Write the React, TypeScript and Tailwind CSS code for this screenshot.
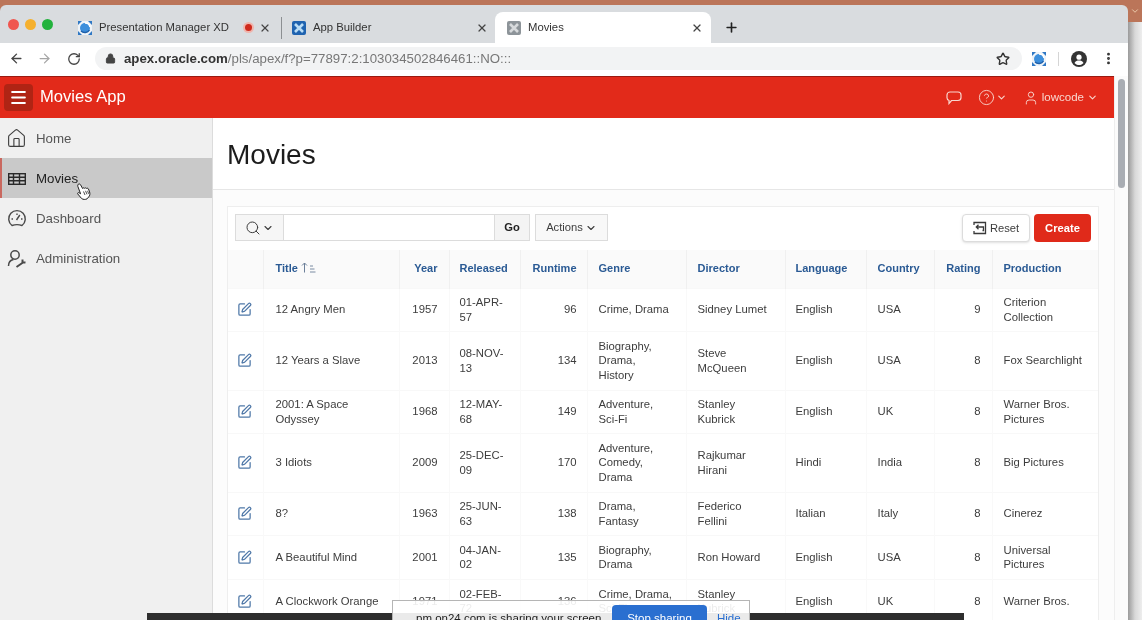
import React from "react";
import { ArrowLeft, ArrowRight, RotateCw, Lock, Star, X, Plus, Search, ChevronDown, Home, SquarePen, CircleHelp, User, EllipsisVertical, Menu } from "lucide-react";

const rows = [
  { h: "h-[43px]", t: "12 Angry Men", y: "1957", r: "01-APR-\n57", m: "96", g: "Crime, Drama", d: "Sidney Lumet", l: "English", c: "USA", s: "9", p: "Criterion\nCollection" },
  { h: "h-[59px]", t: "12 Years a Slave", y: "2013", r: "08-NOV-\n13", m: "134", g: "Biography,\nDrama,\nHistory", d: "Steve\nMcQueen", l: "English", c: "USA", s: "8", p: "Fox Searchlight" },
  { h: "h-[43px]", t: "2001: A Space\nOdyssey", y: "1968", r: "12-MAY-\n68", m: "149", g: "Adventure,\nSci-Fi", d: "Stanley\nKubrick", l: "English", c: "UK", s: "8", p: "Warner Bros.\nPictures" },
  { h: "h-[59px]", t: "3 Idiots", y: "2009", r: "25-DEC-\n09", m: "170", g: "Adventure,\nComedy,\nDrama", d: "Rajkumar\nHirani", l: "Hindi", c: "India", s: "8", p: "Big Pictures" },
  { h: "h-[43px]", t: "8?", y: "1963", r: "25-JUN-\n63", m: "138", g: "Drama,\nFantasy", d: "Federico\nFellini", l: "Italian", c: "Italy", s: "8", p: "Cinerez" },
  { h: "h-[44px]", t: "A Beautiful Mind", y: "2001", r: "04-JAN-\n02", m: "135", g: "Biography,\nDrama", d: "Ron Howard", l: "English", c: "USA", s: "8", p: "Universal\nPictures" },
  { h: "h-[44px]", t: "A Clockwork Orange", y: "1971", r: "02-FEB-\n72", m: "136", g: "Crime, Drama,\nSci-Fi", d: "Stanley\nKubrick", l: "English", c: "UK", s: "8", p: "Warner Bros." },
];

const headers: [string, string][] = [
  ["Year", "px-[11px] text-right"],
  ["Released", "px-[10px] text-left"],
  ["Runtime", "px-[10px] text-right"],
  ["Genre", "px-[11px] text-left"],
  ["Director", "px-[11px] text-left"],
  ["Language", "px-[10px] text-left"],
  ["Country", "px-[11px] text-left"],
  ["Rating", "px-[11px] text-right"],
  ["Production", "px-[11px] text-left"],
];

function TargetFav({ size = 14 }: { size?: number }) {
  return (
    <svg width={size} height={size} viewBox="0 0 14 14">
      <rect width="14" height="14" fill="#eef3f8" />
      <path d="M0 0h4L0 4zM14 0v4L10 0zM0 14v-4l4 4zM14 14h-4l4-4z" fill="#2f78c4" />
      <circle cx="7" cy="7" r="5" fill="#3d8fdc" />
      <path d="M3 10a5.5 5.5 0 0 0 8.5-1" stroke="#1f5fa8" strokeWidth="1.4" fill="none" />
      <path d="M7 2a5 5 0 0 1 5 4" stroke="#ffffff" strokeWidth="1.4" fill="none" />
    </svg>
  );
}

function BuilderFav() {
  return (
    <svg width="14" height="14" viewBox="0 0 14 14">
      <rect width="14" height="14" rx="2" fill="#1f63b0" />
      <path d="M3 3l8 8M11 3l-8 8" stroke="#b9dcf5" strokeWidth="2.6" />
    </svg>
  );
}

function MoviesFav() {
  return (
    <svg width="14" height="14" viewBox="0 0 14 14">
      <rect width="14" height="14" rx="2" fill="#8d9499" />
      <path d="M3 3l8 8M11 3l-8 8" stroke="#d7dadc" strokeWidth="2.6" />
    </svg>
  );
}

function ProfileIcon() {
  return (
    <svg width="16" height="16" viewBox="0 0 16 16">
      <circle cx="8" cy="8" r="8" fill="#333" />
      <circle cx="8" cy="6.200" r="2.600" fill="#fff" />
      <path d="M3.500 12c1-1.800 2.700-2.400 4.500-2.400s3.500.6 4.500 2.400c-1 1.300-2.700 2.100-4.500 2.100S4.500 13.300 3.500 12z" fill="#fff" />
    </svg>
  );
}

function TableIcon() {
  return (
    <svg width="18" height="12" viewBox="0 0 18 12" fill="none" stroke="#2a2a2a" strokeWidth="1.4">
      <rect x="0.7" y="0.7" width="16.6" height="10.6" />
      <path d="M0.7 4.2h16.6M0.7 7.7h16.6M5.5 0.7v10.6M11.5 0.7v10.6" />
    </svg>
  );
}

function GaugeIcon() {
  return (
    <svg width="20" height="20" viewBox="0 0 20 20" fill="none" stroke="#4a4a4a" strokeWidth="1.4">
      <path d="M5 16.500a8.300 8.300 0 1 1 10 0c-3-1-7-1-10 0z" />
      <path d="M9.500 11l3.300-5M4.500 10h1.500M10 4.500V6M15.500 10H14" />
    </svg>
  );
}

function AdminIcon() {
  return (
    <svg width="20" height="20" viewBox="0 0 20 20" fill="none" stroke="#4a4a4a" strokeWidth="1.5">
      <circle cx="8" cy="6" r="4.200" />
      <path d="M1.500 17c0-4 2.500-6 5-6.500" />
      <path d="M9.500 18l6.500-4.500M15.500 10.500v2.700l3 .3" strokeWidth="2" />
    </svg>
  );
}

function SortIcon() {
  return (
    <svg width="15" height="11" viewBox="0 0 15 11" fill="none" stroke="#6b7f99" strokeWidth="1">
      <path d="M3.500 10.500V1M1 3.500L3.500 1 6 3.500" />
      <path d="M9 4h3M9 7h4.500M9 10h5.500" strokeWidth="0.9" />
    </svg>
  );
}

function ResetIcon() {
  return (
    <svg width="14" height="14" viewBox="0 0 14 14" fill="none" stroke="#3a3a3a" strokeWidth="1.3">
      <path d="M1 4V1.500h11.500v11H1V10" />
      <path d="M9.500 9.500h1V6H3.500M5.500 3.800L3.300 6l2.200 2.200" />
    </svg>
  );
}

function ChatIcon() {
  return (
    <svg width="16" height="14" viewBox="0 0 16 14" fill="none" stroke="#f9d6ce" strokeWidth="1.2">
      <path d="M4 1h8a3 3 0 0 1 3 3v2.500a3 3 0 0 1-3 3H5.500L3 12.500V9.500A3 3 0 0 1 1 6.500V4a3 3 0 0 1 3-3z" />
    </svg>
  );
}

function HandCursor() {
  return (
    <svg width="15" height="17" viewBox="0 0 15 17" fill="#fff" stroke="#222" strokeWidth="1">
      <path d="M2.300 1.200c.9-.6 1.800-.2 2.300.7l2 3.600c.3-.8 1.400-.9 2-.2.4-.6 1.400-.6 1.900.1.600-.4 1.500-.2 1.900.5l1.200 3c.6 2 .3 3.800-.9 5l-1.700 2c-1.600.8-4 .7-5.300-.3L1.800 11c-.6-.9.4-1.800 1.300-1.200l1.500 1L1.800 3.300c-.2-.8 0-1.600.5-2.100z" />
      <path d="M7.500 8.500l1.500 3.500M9.500 7.800l1.500 3.500M11.500 7.800l1.200 3" strokeWidth="0.8" />
    </svg>
  );
}

function NavItem({ icon, label, active }: { icon: React.ReactNode; label: string; active?: boolean }) {
  return (
    <div className={active ? "flex h-10 items-center border-l-2 border-[#c9685f] bg-[#c9c9c9] pl-[6px] pt-[1px] text-[13.300px] text-[#222]" : "flex h-10 items-center pl-[7px] pt-[1px] text-[13.300px] text-[#555555]"}>
      <span className={active ? "flex w-[28px] items-center" : "flex w-[29px] items-center"}>{icon}</span>
      {label}
    </div>
  );
}

export default function App() {
  return (
    <div className="relative flex h-[620px] w-[1142px] overflow-hidden bg-[#ececec] font-['Liberation_Sans',Arial,sans-serif] blur-[0.45px]">
      <div className="flex h-[620px] w-[1128px] flex-col bg-[#bb7559] pt-[5px]">
        {/* Tab strip */}
        <div className="flex h-[38px] items-end rounded-t-md bg-[#d9dcdf] text-[11.300px] text-[#333]">
          <div className="flex h-[38px] w-[70px] items-center gap-[6px] pl-[8px]">
            <span className="h-[11px] w-[11px] rounded-full bg-[#f0564f]" />
            <span className="h-[11px] w-[11px] rounded-full bg-[#f5b02e]" />
            <span className="h-[11px] w-[11px] rounded-full bg-[#22b23c]" />
          </div>
          <div className="flex h-[31px] w-[212px] items-center pl-[8px]">
            <TargetFav />
            <span className="ml-[7px] w-[130px] whitespace-nowrap">Presentation Manager XD</span>
            <span className="ml-[14px] flex h-[11px] w-[11px] items-center justify-center rounded-full bg-[#f0b5ad]"><span className="h-[7px] w-[7px] rounded-full bg-[#cf2a1c]" /></span>
            <X size={12} strokeWidth={2.4} className="ml-[5px] text-[#444]" />
            <span className="ml-auto h-[22px] w-px bg-[#8c8f92]" />
          </div>
          <div className="flex h-[31px] w-[213px] items-center pl-[10px]">
            <BuilderFav />
            <span className="ml-[7px] w-[163px]">App Builder</span>
            <X size={12} strokeWidth={2.4} className="text-[#444]" />
          </div>
          <div className="flex h-[31px] w-[216px] items-center rounded-t-lg bg-white pl-[12px]">
            <MoviesFav />
            <span className="ml-[7px] w-[163px]">Movies</span>
            <X size={12} strokeWidth={2.4} className="text-[#444]" />
          </div>
          <Plus size={15} strokeWidth={2.6} className="mb-[8px] ml-[13px] text-[#222]" />
        </div>
        {/* Toolbar */}
        <div className="flex h-[33px] items-center bg-white pb-[2px]">
          <ArrowLeft size={15} strokeWidth={2.2} className="ml-[9px] text-[#444]" />
          <ArrowRight size={15} className="ml-[13px] text-[#a6a6a6]" />
          <RotateCw size={14} strokeWidth={2.2} className="ml-[15px] text-[#444]" />
          <div className="ml-[14px] flex h-[23px] w-[927px] items-center rounded-full bg-[#f2f3f4] pl-[10px]">
            <Lock size={11} fill="#444" className="text-[#444]" />
            <span className="ml-[8px] text-[13.250px] whitespace-nowrap text-[#777]"><span className="font-bold text-[#333]">apex.oracle.com</span>/pls/apex/f?p=77897:2:103034502846461::NO:::</span>
            <Star size={14} strokeWidth={2.4} className="ml-auto mr-[12px] text-[#333]" />
          </div>
          <span className="ml-[10px]"><TargetFav size={14} /></span>
          <span className="ml-[12px] h-[14px] w-px bg-[#d5d5d5]" />
          <span className="ml-[12px]"><ProfileIcon /></span>
          <EllipsisVertical size={15} strokeWidth={2.6} className="ml-[14px] text-[#333]" />
        </div>
        {/* Page */}
        <div className="flex min-h-0 flex-1 bg-white">
          <div className="flex min-w-0 flex-1 flex-col">
            <div className="flex h-[42px] items-center border-t border-[#9a1a10] bg-[#e22a1a] text-[#f9d6ce]">
              <div className="ml-[4px] flex h-[27px] w-[29px] items-center justify-center rounded-sm bg-[#b02414] text-white"><Menu size={19} strokeWidth={2.6} /></div>
              <span className="ml-[7px] text-[16.600px] text-white">Movies App</span>
              <span className="ml-auto"><ChatIcon /></span>
              <CircleHelp size={17} strokeWidth={1.3} className="ml-[16px]" />
              <ChevronDown size={11} strokeWidth={2.4} className="ml-[1px]" />
              <User size={16} strokeWidth={1.4} className="ml-[16px]" />
              <span className="ml-[3px] text-[11.500px]">lowcode</span>
              <ChevronDown size={11} strokeWidth={2.4} className="ml-[3px] mr-[16px]" />
            </div>
            <div className="flex min-h-0 flex-1">
              <div className="w-[213px] shrink-0 border-r border-[#dcdcdc] bg-[#f0f0f0]">
                <NavItem icon={<Home size={21} strokeWidth={1.3} className="-ml-px text-[#3f3f3f]" />} label="Home" />
                <NavItem active icon={<TableIcon />} label="Movies" />
                <NavItem icon={<GaugeIcon />} label="Dashboard" />
                <NavItem icon={<AdminIcon />} label="Administration" />
              </div>
              <div className="min-w-0 flex-1 bg-[#fcfcfc]">
                <div className="flex h-[72px] items-center border-b border-[#e6e6e6] bg-white pl-[14px] pt-[3px] text-[28px] text-[#1c1c1c]">Movies</div>
                <div className="ml-[14px] mt-[16px] w-[872px] border border-[#eeeeee] bg-white">
                  <div className="flex h-[43px] items-start px-[7px] pt-[7px] text-[11.200px] text-[#3d3d3d]">
                    <div className="flex h-[27px] w-[49px] items-center justify-center gap-[1px] border border-[#dcdcdc] bg-[#f6f6f6]"><Search size={16} strokeWidth={1.5} /><ChevronDown size={12} strokeWidth={2.2} /></div>
                    <div className="h-[27px] w-[210px] border-y border-[#dcdcdc] bg-white" />
                    <div className="flex h-[27px] w-[36px] items-center justify-center border border-[#dcdcdc] bg-[#f4f4f4] font-bold text-[#222]">Go</div>
                    <div className="ml-[5px] flex h-[27px] w-[73px] items-center justify-center gap-[2px] border border-[#dcdcdc] bg-[#f8f8f8]">Actions<ChevronDown size={12} strokeWidth={2.2} /></div>
                    <div className="ml-auto flex h-[28px] w-[68px] items-center justify-center gap-[3px] rounded-sm border border-[#dcdcdc] bg-white shadow-sm"><ResetIcon />Reset</div>
                    <div className="ml-[4px] flex h-[28px] w-[57px] items-center justify-center rounded-sm bg-[#e02a1a] font-bold text-white">Create</div>
                  </div>
                  <table className="w-[870px] table-fixed border-collapse text-[11.300px] leading-[14.500px] text-[#3d3d3d]">
                    <colgroup>
                      <col className="w-[35px]" /><col className="w-[136px]" /><col className="w-[50px]" /><col className="w-[71px]" /><col className="w-[67px]" /><col className="w-[99px]" /><col className="w-[99px]" /><col className="w-[81px]" /><col className="w-[68px]" /><col className="w-[58px]" /><col />
                    </colgroup>
                    <thead>
                      <tr className="h-[38px] bg-[#fafafa] text-[11px] font-bold text-[#2a5a94]">
                        <th className="border-r border-[#f0f0f0]" />
                        <th className="border-r border-[#f0f0f0] pb-[2px] pl-[12px] text-left"><span className="flex items-center gap-[3px]">Title<SortIcon /></span></th>
                        {headers.map(([h, a]) => (
                          <th key={h} className={`border-r border-[#f0f0f0] pb-[2px] last:border-r-0 ${a}`}>{h}</th>
                        ))}
                      </tr>
                    </thead>
                    <tbody>
                      {rows.map((x) => (
                        <tr key={x.t} className={`${x.h} border-t border-[#f8f8f8]`}>
                          <td className="border-r border-[#f9f9f9] pl-[9px]"><SquarePen size={15} strokeWidth={2} className="text-[#4f78a8]" /></td>
                          <td className="border-r border-[#f9f9f9] pl-[12px] whitespace-pre-line">{x.t}</td>
                          <td className="border-r border-[#f9f9f9] pr-[11px] text-right">{x.y}</td>
                          <td className="border-r border-[#f9f9f9] pl-[10px] whitespace-pre-line">{x.r}</td>
                          <td className="border-r border-[#f9f9f9] pr-[10px] text-right">{x.m}</td>
                          <td className="border-r border-[#f9f9f9] pl-[11px] whitespace-pre-line">{x.g}</td>
                          <td className="border-r border-[#f9f9f9] pl-[11px] whitespace-pre-line">{x.d}</td>
                          <td className="border-r border-[#f9f9f9] pl-[10px]">{x.l}</td>
                          <td className="border-r border-[#f9f9f9] pl-[11px]">{x.c}</td>
                          <td className="border-r border-[#f9f9f9] pr-[11px] text-right">{x.s}</td>
                          <td className="pl-[11px] whitespace-pre-line">{x.p}</td>
                        </tr>
                      ))}
                    </tbody>
                  </table>
                </div>
              </div>
            </div>
          </div>
          <div className="w-[14px] shrink-0 border-l border-[#eeeeee] bg-[#fbfbfb] pl-[3px] pt-[3px]">
            <div className="h-[109px] w-[7px] rounded-full bg-[#a9adb3]" />
          </div>
        </div>
      </div>
      <div className="flex flex-1 flex-col">
        <div className="flex h-[22px] items-center justify-end bg-[#bb7559] pr-[2px]"><ChevronDown size={10} className="text-[#f3d9b8]" /></div>
        <div className="flex-1 bg-gradient-to-r from-[#9a9a9a] via-[#d8d8d8] to-[#eeeeee]" />
      </div>

      {/* Hand cursor over the nav */}
      <div className="absolute left-[76px] top-[183px]"><HandCursor /></div>

      {/* Screen sharing notice */}
      <div className="absolute left-[147px] top-[613px] h-[7px] w-[817px] bg-[#2e2e2e]" />
      <div className="absolute left-[392px] top-[600px] flex h-[34px] w-[358px] items-start border border-[#b5b5b5] bg-white/90 pl-[23px] text-[11.500px] leading-[14px] text-[#222]">
        <span className="mt-[10px] w-[196px] whitespace-nowrap">pm.on24.com is sharing your screen.</span>
        <span className="mt-[4px] flex h-[24px] w-[95px] justify-center rounded-t bg-[#2a6fd0] pt-[6px] text-white">Stop sharing</span>
        <span className="ml-[10px] mt-[10px] text-[#2a6fd0]">Hide</span>
      </div>
    </div>
  );
}
